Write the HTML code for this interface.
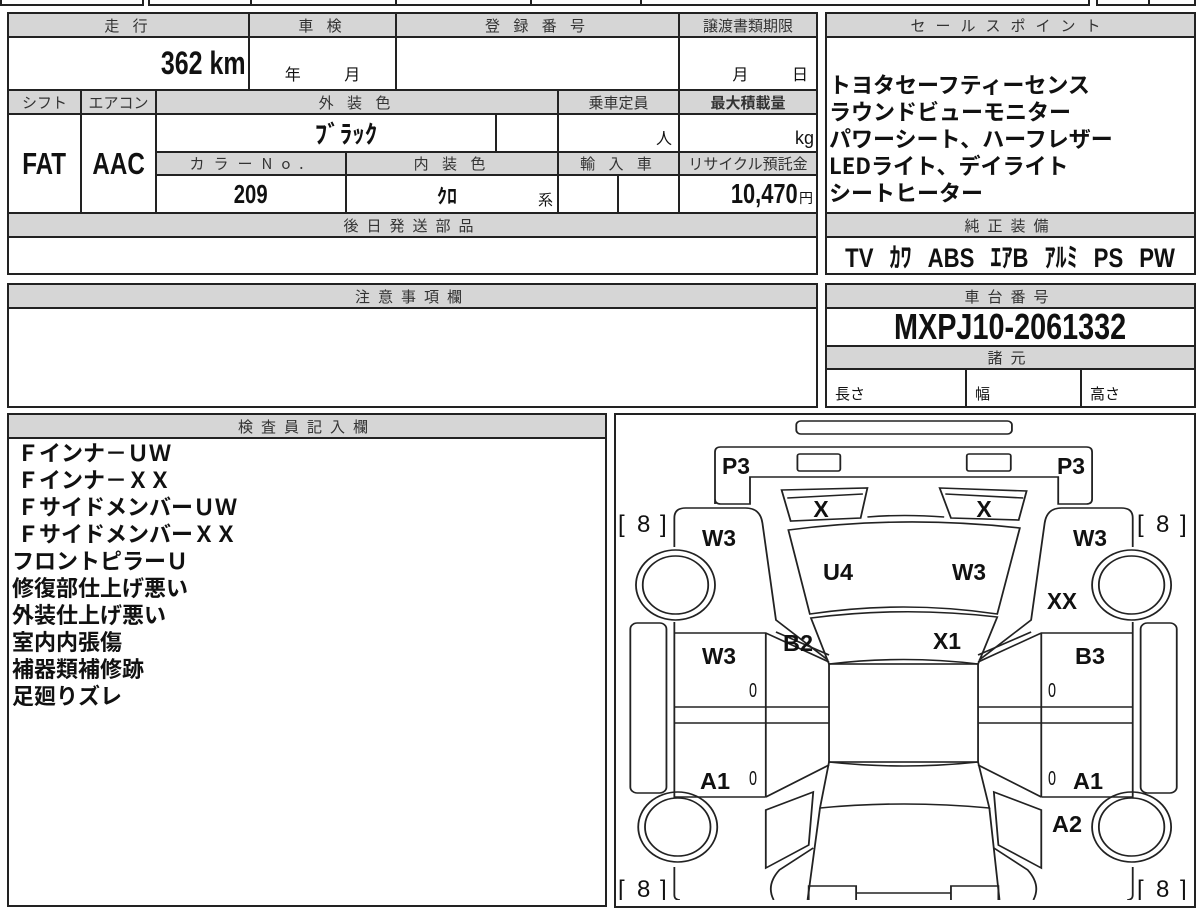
<!DOCTYPE html>
<html><head><meta charset="utf-8">
<style>
*{margin:0;padding:0;box-sizing:border-box}
body{width:1200px;height:900px;overflow:hidden;background:#fff;position:relative;font-family:"Liberation Sans","Noto Sans CJK JP",sans-serif;color:#111}
.c{position:absolute;border:2px solid #222;display:flex;align-items:center;justify-content:center;white-space:nowrap;overflow:hidden}
.g{background:#d6d6d6;font-family:"Noto Sans CJK JP",sans-serif;font-size:15px;letter-spacing:5px;color:#333;line-height:1}
.big{font-weight:bold}
.n{display:inline-block;transform:scaleX(.78)}
.jp{font-family:"Noto Sans CJK JP",sans-serif}
.t{position:absolute;white-space:nowrap}
</style></head><body>

<div class="c" style="left:0;top:-10px;width:144px;height:16px"></div>
<div class="c" style="left:148px;top:-10px;width:104px;height:16px"></div>
<div class="c" style="left:250px;top:-10px;width:147px;height:16px"></div>
<div class="c" style="left:395px;top:-10px;width:137px;height:16px"></div>
<div class="c" style="left:530px;top:-10px;width:112px;height:16px"></div>
<div class="c" style="left:640px;top:-10px;width:450px;height:16px"></div>
<div class="c" style="left:1096px;top:-10px;width:54px;height:16px"></div>
<div class="c" style="left:1148px;top:-10px;width:48px;height:16px"></div>

<div class="c g" style="left:7px;top:12px;width:243px;height:26px">走 行</div>
<div class="c g" style="left:248px;top:12px;width:149px;height:26px">車 検</div>
<div class="c g" style="left:395px;top:12px;width:285px;height:26px">登 録 番 号</div>
<div class="c g" style="left:678px;top:12px;width:140px;height:26px;letter-spacing:0">譲渡書類期限</div>

<div class="c big" style="left:7px;top:36px;width:243px;height:55px;justify-content:flex-end;padding-right:2px;font-size:32px"><span class="n" style="transform-origin:right">362 km</span></div>
<div class="c jp" style="left:248px;top:36px;width:149px;height:55px;align-items:flex-end;padding-bottom:4px;font-size:16px;word-spacing:40px">年 月</div>
<div class="c" style="left:395px;top:36px;width:285px;height:55px"></div>
<div class="c jp" style="left:678px;top:36px;width:140px;height:55px;align-items:flex-end;justify-content:flex-end;padding:0 8px 4px 0;font-size:16px;word-spacing:40px">月 日</div>

<div class="c g" style="left:7px;top:89px;width:75px;height:26px;letter-spacing:0">シフト</div>
<div class="c g" style="left:80px;top:89px;width:77px;height:26px;letter-spacing:0">エアコン</div>
<div class="c g" style="left:155px;top:89px;width:404px;height:26px">外 装 色</div>
<div class="c g" style="left:557px;top:89px;width:123px;height:26px;letter-spacing:0">乗車定員</div>
<div class="c g" style="left:678px;top:89px;width:140px;height:26px;letter-spacing:0;font-weight:bold">最大積載量</div>

<div class="c big" style="left:7px;top:113px;width:75px;height:101px;font-size:31px"><span class="n">FAT</span></div>
<div class="c big" style="left:80px;top:113px;width:77px;height:101px;font-size:31px"><span class="n">AAC</span></div>
<div class="c big jp" style="left:155px;top:113px;width:342px;height:40px;font-size:25px;padding-left:40px">ﾌﾞﾗｯｸ</div>
<div class="c" style="left:495px;top:113px;width:64px;height:40px"></div>
<div class="c jp" style="left:557px;top:113px;width:123px;height:40px;justify-content:flex-end;align-items:flex-end;padding:0 6px 2px 0;font-size:16px">人</div>
<div class="c" style="left:678px;top:113px;width:140px;height:40px;justify-content:flex-end;align-items:flex-end;padding:0 2px 2px 0;font-size:18px">kg</div>

<div class="c g" style="left:155px;top:151px;width:192px;height:25px;letter-spacing:9px">カラーNo.</div>
<div class="c g" style="left:345px;top:151px;width:214px;height:25px">内 装 色</div>
<div class="c g" style="left:557px;top:151px;width:123px;height:25px">輸 入 車</div>
<div class="c g" style="left:678px;top:151px;width:140px;height:25px;letter-spacing:0">リサイクル預託金</div>

<div class="c big" style="left:155px;top:174px;width:192px;height:40px;font-size:26px"><span class="n">209</span></div>
<div class="c" style="left:345px;top:174px;width:214px;height:40px"><span class="jp big" style="font-size:20px;margin-left:-10px">ｸﾛ</span><span class="jp" style="position:absolute;right:4px;bottom:2px;font-size:15px">系</span></div>
<div class="c" style="left:557px;top:174px;width:62px;height:40px"></div>
<div class="c" style="left:617px;top:174px;width:63px;height:40px"></div>
<div class="c" style="left:678px;top:174px;width:140px;height:40px;justify-content:flex-end;padding-right:3px"><span class="big n" style="font-size:28px;transform-origin:right">10,470</span><span class="jp" style="font-size:14px;margin-left:1px;margin-top:8px">円</span></div>

<div class="c g" style="left:7px;top:212px;width:811px;height:26px;letter-spacing:8px">後日発送部品</div>
<div class="c" style="left:7px;top:236px;width:811px;height:39px"></div>

<div class="c g" style="left:825px;top:12px;width:371px;height:26px;letter-spacing:10px">セールスポイント</div>
<div class="c" style="left:825px;top:36px;width:371px;height:178px"></div>
<div class="t jp" style="left:829px;top:71px;font-size:22px;font-weight:bold;line-height:27px">トヨタセーフティーセンス<br>ラウンドビューモニター<br>パワーシート、ハーフレザー<br>LEDライト、デイライト<br>シートヒーター</div>
<div class="c g" style="left:825px;top:212px;width:371px;height:26px;letter-spacing:8px">純正装備</div>
<div class="c big" style="left:825px;top:236px;width:371px;height:39px;font-size:27px;word-spacing:12px"><span class="n" style="transform:scaleX(.82)">TV <span class="jp">ｶﾜ</span> ABS <span class="jp">ｴｱ</span>B <span class="jp">ｱﾙﾐ</span> PS PW</span></div>

<div class="c g" style="left:7px;top:283px;width:811px;height:26px;letter-spacing:8px">注意事項欄</div>
<div class="c" style="left:7px;top:307px;width:811px;height:101px"></div>

<div class="c g" style="left:825px;top:283px;width:371px;height:26px;letter-spacing:8px">車台番号</div>
<div class="c big" style="left:825px;top:307px;width:371px;height:40px;font-size:36px"><span class="n" style="transform:scaleX(.8)">MXPJ10-2061332</span></div>
<div class="c g" style="left:825px;top:345px;width:371px;height:25px;letter-spacing:8px">諸元</div>
<div class="c jp" style="left:825px;top:368px;width:142px;height:40px;justify-content:flex-start;padding:10px 0 0 8px;font-size:15px">長さ</div>
<div class="c jp" style="left:965px;top:368px;width:117px;height:40px;justify-content:flex-start;padding:10px 0 0 8px;font-size:15px">幅</div>
<div class="c jp" style="left:1080px;top:368px;width:116px;height:40px;justify-content:flex-start;padding:10px 0 0 8px;font-size:15px">高さ</div>

<div class="c g" style="left:7px;top:413px;width:600px;height:26px;letter-spacing:8px">検査員記入欄</div>
<div class="c" style="left:7px;top:437px;width:600px;height:470px"></div>
<div class="t jp" style="left:12px;top:439px;font-size:22px;font-weight:bold;line-height:27px">&nbsp;Ｆインナ－ＵＷ<br>&nbsp;Ｆインナ－ＸＸ<br>&nbsp;ＦサイドメンバーＵＷ<br>&nbsp;ＦサイドメンバーＸＸ<br>フロントピラーＵ<br>修復部仕上げ悪い<br>外装仕上げ悪い<br>室内内張傷<br>補器類補修跡<br>足廻りズレ</div>

<div class="c" style="left:614px;top:413px;width:582px;height:495px"></div>
<svg style="position:absolute;left:0;top:0" width="1200" height="900" viewBox="0 0 1200 900">
<g fill="none" stroke="#222" stroke-width="1.6" transform="translate(610,0) scale(1.129,1) translate(-610,0)">
<rect x="775" y="421" width="191" height="13" rx="4"/>
<path d="M703,504 L703,452 Q703,447 708,447 L1032,447 Q1037,447 1037,452 L1037,499 Q1037,504 1032,504 L1007,504 L1007,477 L734,477 L734,504 L708,504 Q703,504 703,499"/>
<rect x="776" y="454" width="38" height="17" rx="2"/>
<rect x="926" y="454" width="39" height="17" rx="2"/>
<path d="M762,490 L838,488 L832,518 L770,521 Z M767,498 L834,494"/>
<path d="M902,488 L979,491 L972,520 L912,518 Z M907,494 L976,498"/>
<path d="M838,517 Q870,514 906,517"/>
<path d="M768,530 Q870,515 973,528 L953,614 Q870,600 787,614 Z"/>
<path d="M788,618 Q870,606 953,617 L936,664 Q870,655 804,664 Z"/>
<rect x="804" y="664" width="132" height="98"/>
<path d="M804,762 Q870,770 936,762 L946,808 Q870,800 796,808 Z"/>
<path d="M796,808 L785,900 M946,808 L955,900"/>
<path d="M667,547 L667,518 Q667,508 677,508 L730,508 Q743,508 745,523 L757,620 L803,660"/>
<path d="M757,632 L804,655"/>
<path d="M667,622 L667,633 L748,633 L804,662 M667,633 L667,797 L748,797 M748,633 L748,797 M667,707 L804,707 M667,723 L804,723"/>
<path d="M748,797 L804,765 M748,810 L790,792 L786,845 L748,868 Z M667,867 L667,895 Q667,900 672,900"/>
<path d="M790,848 L760,870 Q748,885 755,900"/>
<rect x="628" y="623" width="32" height="170" rx="6"/>
<circle cx="668" cy="585" r="35"/><circle cx="668" cy="585" r="29"/>
<circle cx="670" cy="827" r="35"/><circle cx="670" cy="827" r="29"/>
<path d="M1073,547 L1073,518 Q1073,508 1063,508 L1010,508 Q997,508 995,523 L983,620 L937,660"/>
<path d="M983,632 L936,655"/>
<path d="M1073,622 L1073,633 L992,633 L936,662 M1073,633 L1073,797 L992,797 M992,633 L992,797 M1073,707 L936,707 M1073,723 L936,723"/>
<path d="M992,797 L936,765 M992,810 L950,792 L954,845 L992,868 Z M1073,867 L1073,895 Q1073,900 1068,900"/>
<path d="M950,848 L980,870 Q992,885 985,900"/>
<rect x="1080" y="623" width="32" height="170" rx="6"/>
<circle cx="1072" cy="585" r="35"/><circle cx="1072" cy="585" r="29"/>
<circle cx="1072" cy="827" r="35"/><circle cx="1072" cy="827" r="29"/>
<path d="M786,900 L786,886 L828,886 L828,900 M912,900 L912,886 L954,886 L954,900 M828,893 L912,893"/>
</g>
<g font-family="Liberation Sans, sans-serif" font-weight="bold" font-size="23" fill="#111" text-anchor="middle">
<text x="736" y="474" textLength="28" lengthAdjust="spacingAndGlyphs">P3</text><text x="1071" y="474" textLength="28" lengthAdjust="spacingAndGlyphs">P3</text>
<text x="821" y="517">X</text><text x="984" y="517">X</text>
<text x="719" y="546" textLength="34" lengthAdjust="spacingAndGlyphs">W3</text><text x="1090" y="546" textLength="34" lengthAdjust="spacingAndGlyphs">W3</text>
<text x="838" y="580" textLength="30" lengthAdjust="spacingAndGlyphs">U4</text><text x="969" y="580" textLength="34" lengthAdjust="spacingAndGlyphs">W3</text>
<text x="1062" y="609" textLength="30" lengthAdjust="spacingAndGlyphs">XX</text>
<text x="798" y="651" textLength="30" lengthAdjust="spacingAndGlyphs">B2</text><text x="947" y="649" textLength="28" lengthAdjust="spacingAndGlyphs">X1</text>
<text x="719" y="664" textLength="34" lengthAdjust="spacingAndGlyphs">W3</text><text x="1090" y="664" textLength="30" lengthAdjust="spacingAndGlyphs">B3</text>
<text x="715" y="789" textLength="30" lengthAdjust="spacingAndGlyphs">A1</text><text x="1088" y="789" textLength="30" lengthAdjust="spacingAndGlyphs">A1</text>
<text x="1067" y="832" textLength="30" lengthAdjust="spacingAndGlyphs">A2</text>
</g>
<g font-family="Liberation Sans, sans-serif" font-size="20" fill="#111" text-anchor="middle">
<text x="753" y="697" textLength="8" lengthAdjust="spacingAndGlyphs">0</text><text x="1052" y="697" textLength="8" lengthAdjust="spacingAndGlyphs">0</text>
<text x="753" y="785" textLength="8" lengthAdjust="spacingAndGlyphs">0</text><text x="1052" y="785" textLength="8" lengthAdjust="spacingAndGlyphs">0</text>
</g>
<g font-family="Liberation Sans, sans-serif" font-size="24" fill="#111">
<text x="618" y="532">[</text><text x="637" y="532">8</text><text x="660" y="532">]</text>
<text x="1137" y="532">[</text><text x="1156" y="532">8</text><text x="1180" y="532">]</text>
<text x="618" y="897">[</text><text x="637" y="897">8</text><text x="660" y="897">]</text>
<text x="1137" y="897">[</text><text x="1156" y="897">8</text><text x="1180" y="897">]</text>
</g>
</svg>
</body></html>
